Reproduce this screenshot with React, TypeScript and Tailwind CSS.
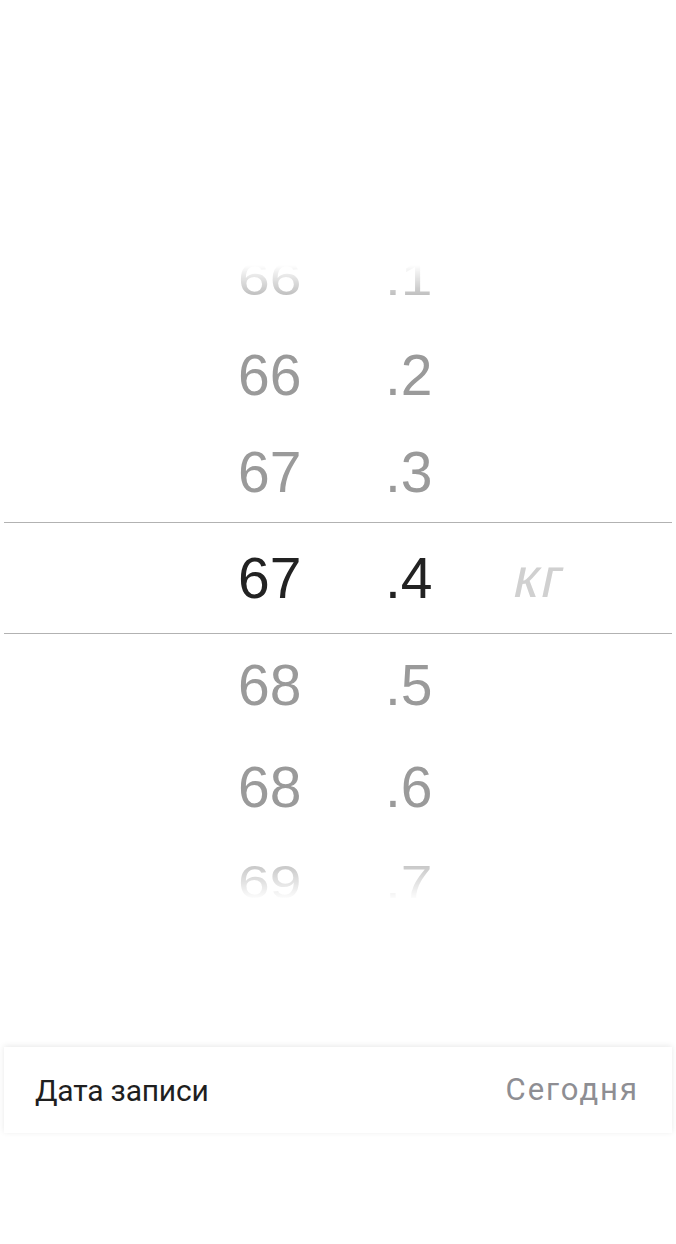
import React from 'react';

interface WheelRow {
  whole: string;
  frac: string;
  h: string;
  squash?: boolean;
}

const rowsAbove: WheelRow[] = [
  { whole: '66', frac: '.1', h: 'h-[96px]', squash: true },
  { whole: '66', frac: '.2', h: 'h-[96px]' },
  { whole: '67', frac: '.3', h: 'h-[99px]' },
];

const rowsBelow: WheelRow[] = [
  { whole: '68', frac: '.5', h: 'h-[103px]' },
  { whole: '68', frac: '.6', h: 'h-[100px]' },
  { whole: '69', frac: '.7', h: 'h-[90px]', squash: true },
];

function Row({ row }: { row: WheelRow }) {
  return (
    <div className={`${row.h} flex items-center pl-[238px] text-[57px] leading-none text-[#9a9a9a]`}>
      <div className={`flex items-center ${row.squash ? 'scale-y-[0.82]' : ''}`}>
        <span className="w-[147px]">{row.whole}</span>
        <span className="w-[128px]">{row.frac}</span>
      </div>
    </div>
  );
}

export default function App() {
  return (
    <div className="w-[676px] h-[1244px] bg-white overflow-hidden font-['Liberation_Sans',Arial,sans-serif]">
      <div className="h-[231px]" />

      {/* weight wheel */}
      <div className="h-[696px] flex flex-col [mask-image:linear-gradient(to_bottom,transparent_0px,transparent_34px,black_82px,black_606px,transparent_669px)]">
        {rowsAbove.map((r, i) => (
          <Row key={'a' + i} row={r} />
        ))}
        <div className="mx-[4px] h-[112px] border-y border-[#b2b2b2] flex items-center pl-[234px] text-[57px] leading-none text-[#222222]">
          <span className="w-[147px]">67</span>
          <span className="w-[130px]">.4</span>
          <span className="inline-block -skew-x-12 text-[#d0d0d0] text-[56px] tracking-[3px] translate-y-[0px]">кг</span>
        </div>
        {rowsBelow.map((r, i) => (
          <Row key={'b' + i} row={r} />
        ))}
      </div>

      <div className="h-[120px]" />

      <div className="mx-[4px] h-[86px] bg-white shadow-[0_-1px_6px_rgba(0,0,0,0.09)] flex items-center justify-between pl-[31px] pr-[33px] font-['Roboto',sans-serif]">
        <span className="text-[30px] tracking-[-0.2px] text-[#1f1f1f]">Дата записи</span>
        <span className="text-[31px] tracking-[2px] text-[#8e8e93]">Сегодня</span>
      </div>
    </div>
  );
}
